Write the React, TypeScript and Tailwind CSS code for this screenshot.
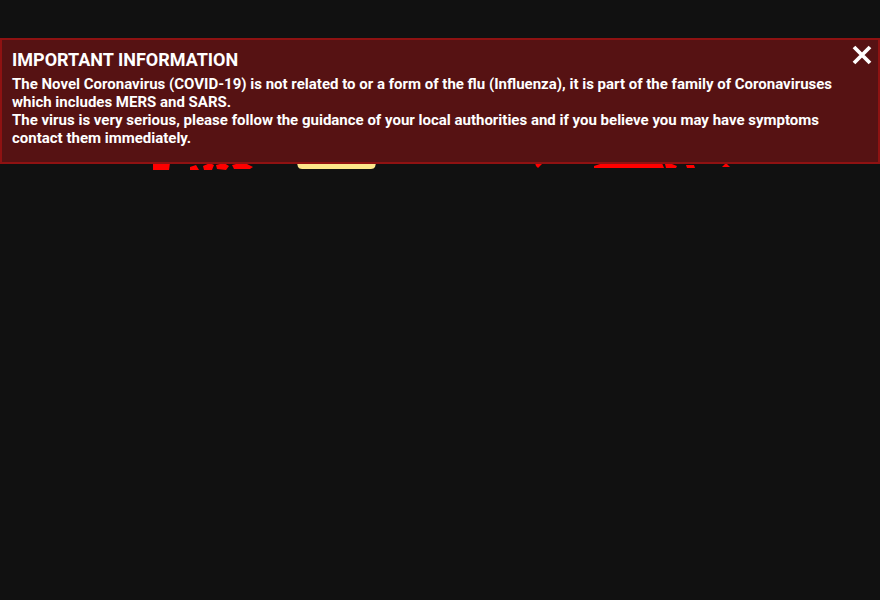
import React from "react";

function HiddenLogo() {
  return (
    <svg width="880" height="20" viewBox="0 0 880 20" className="block">
      <path d="M153 0 H170 L169 7 H153 Z" fill="#ff0000" />
      <path d="M190 4 L196 2 L199 7 L190 7 Z" fill="#ff0000" />
      <path d="M203 3 L210 0 L214 2 L212 7 L204 7 Z" fill="#ff0000" />
      <path d="M216 2 L224 0 L229 3 L226 7 L217 6 Z" fill="#ff0000" />
      <path d="M232 2 L240 0 L247 1 L253 4 L250 6 L234 6 Z" fill="#ff0000" />
      <path d="M297 0 H376 L375 4 Q374 6 371 6 H302 Q299 6 298 4 Z" fill="#fde68a" />
      <path d="M535 0 H543 L540 3 L538 5 L536 3 Z" fill="#ff0000" />
      <path d="M594 3 L600 1 L662 0 L664 5 L594 5 Z" fill="#ff0000" />
      <path d="M665 1 L672 1 L677 3 L676 5 L666 5 Z" fill="#ff0000" />
      <path d="M686 2 L694 2 L695 5 L687 5 Z" fill="#ff0000" />
      <path d="M726 0 L730 4 L722 4 Z" fill="#ff0000" />
    </svg>
  );
}

export default function App() {
  return (
    <div
      className="relative h-[600px] w-[880px] overflow-hidden bg-[#111111]"
      style={{ fontFamily: "Roboto, 'Liberation Sans', sans-serif" }}
    >
      <div className="pt-[163px]">
        <HiddenLogo />
      </div>
      <div className="absolute left-0 top-[38px] w-[880px] border-2 border-[#8f1212] bg-[#561213] px-[10px] pb-[15px] pt-[8px] text-white">
        <div className="text-[18px] font-bold leading-[24px]">IMPORTANT INFORMATION</div>
        <p className="mt-[3px] text-[15px] font-bold leading-[18px]">
          The Novel Coronavirus (COVID-19) is not related to or a form of the flu (Influenza), it is part of the family of Coronaviruses which includes MERS and SARS.
          <br />
          The virus is very serious, please follow the guidance of your local authorities and if you believe you may have symptoms contact them immediately.
        </p>
        <button className="absolute right-[4px] top-[3px] flex h-[24px] w-[24px] items-center justify-center text-white">
          <svg width="22" height="22" viewBox="0 0 22 22">
            <path d="M3 3 L19 19 M19 3 L3 19" stroke="#ffffff" strokeWidth="3.8" strokeLinecap="butt" />
          </svg>
        </button>
      </div>
    </div>
  );
}
